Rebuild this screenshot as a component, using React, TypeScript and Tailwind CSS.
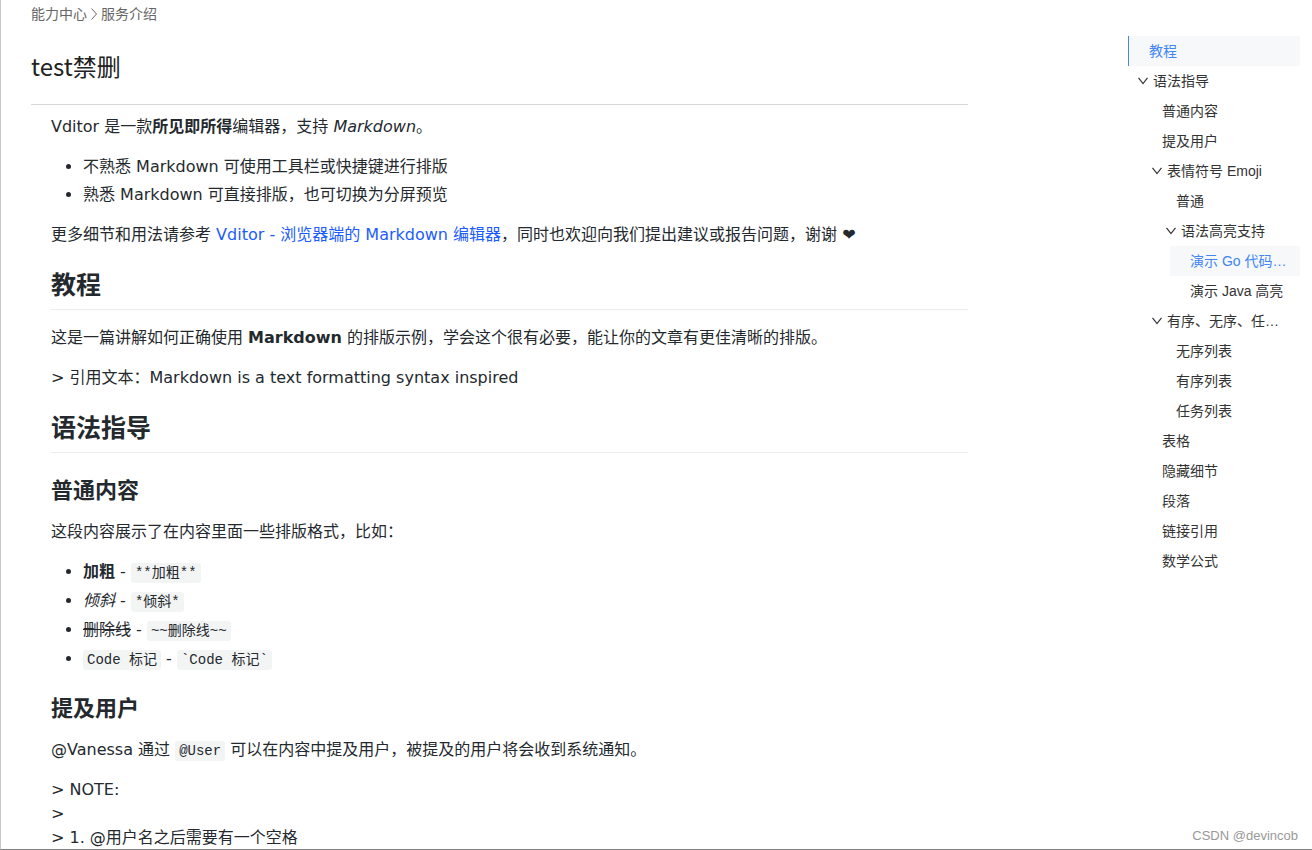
import { useState, type ReactNode } from "react";

type TocNode = {
  title: string;
  active?: "current" | "selected";
  children?: TocNode[];
};

const toc: TocNode[] = [
  { title: "教程", active: "current" },
  {
    title: "语法指导",
    children: [
      { title: "普通内容" },
      { title: "提及用户" },
      {
        title: "表情符号 Emoji",
        children: [
          { title: "普通" },
          {
            title: "语法高亮支持",
            children: [
              { title: "演示 Go 代码…", active: "selected" },
              { title: "演示 Java 高亮" },
            ],
          },
        ],
      },
      {
        title: "有序、无序、任…",
        children: [
          { title: "无序列表" },
          { title: "有序列表" },
          { title: "任务列表" },
        ],
      },
      { title: "表格" },
      { title: "隐藏细节" },
      { title: "段落" },
      { title: "链接引用" },
      { title: "数学公式" },
    ],
  },
];

function TocItem({ node }: { node: TocNode }) {
  const [open, setOpen] = useState(true);

  if (!node.children) {
    const state =
      node.active === "current"
        ? "border-l border-[#4285f4] bg-[#f6f8fa] text-[#4285f4]"
        : node.active === "selected"
          ? "bg-[#f6f8fa] text-[#4285f4]"
          : "text-[#333]";
    return (
      <li>
        <a href="#" className={`block h-[30px] truncate pl-5 leading-[30px] ${state}`}>
          {node.title}
        </a>
      </li>
    );
  }

  return (
    <li>
      <button
        type="button"
        aria-expanded={open}
        onClick={() => setOpen(!open)}
        className="flex h-[30px] w-full items-center gap-[5px] pl-[10px] text-left text-[#333]"
      >
        <svg
          viewBox="0 0 10 10"
          className={open ? "size-[10px] shrink-0" : "size-[10px] shrink-0 -rotate-90"}
          fill="none"
          stroke="currentColor"
          strokeWidth="1.2"
          aria-hidden="true"
        >
          <path d="M0.5 1.8 L5 7.6 L9.5 1.8" />
        </svg>
        <span className="truncate">{node.title}</span>
      </button>
      {open && (
        <ul className="pl-[14px]">
          {node.children.map((child) => (
            <TocItem key={child.title} node={child} />
          ))}
        </ul>
      )}
    </li>
  );
}

function Code({ children }: { children: ReactNode }) {
  return (
    <code className="rounded-[3px] bg-[#f3f4f4] px-1 py-[2px] font-['Liberation_Mono','Noto_Sans_CJK_SC',monospace] text-[14px] leading-5">
      {children}
    </code>
  );
}

function H2({ children }: { children: ReactNode }) {
  return (
    <h2 className="mt-6 mb-4 border-b border-[#eaecef] pb-2 text-[25px] leading-[30px] font-semibold">
      {children}
    </h2>
  );
}

function H3({ children }: { children: ReactNode }) {
  return <h3 className="mt-6 mb-4 text-[22px] leading-[27px] font-semibold">{children}</h3>;
}

export default function App() {
  return (
    <div className="relative flex h-screen items-start gap-40 overflow-hidden border-b border-l border-b-[#808080] border-l-[#c8c8c8] bg-white pr-3 pl-[30px]">
      <main className="min-w-0 flex-1 font-['DejaVu_Sans','Noto_Sans_CJK_SC',sans-serif] text-[#24292e]">
        <nav
          aria-label="面包屑"
          className="flex items-center gap-1 pt-1 font-['Liberation_Sans','Noto_Sans_CJK_SC',sans-serif] text-sm text-[#666]"
        >
          <a href="#">能力中心</a>
          <svg
            viewBox="0 0 6 12"
            className="h-3 w-[6px]"
            fill="none"
            stroke="currentColor"
            aria-hidden="true"
          >
            <path d="M0.5 0.5 L5.5 6 L0.5 11.5" />
          </svg>
          <a href="#">服务介绍</a>
        </nav>
        <h1 className="mt-6 border-b border-[#d8d8d8] pb-5 font-['Noto_Sans_CJK_SC',sans-serif] text-2xl leading-9 text-[#222]">
          test禁删
        </h1>
        <article className="pt-[10px] pl-5 text-base leading-6">
          <p className="mb-4">
            Vditor 是一款<strong>所见即所得</strong>编辑器，支持 <em>Markdown</em>。
          </p>
          <ul className="mb-4 list-disc space-y-1 pl-8">
            <li>不熟悉 Markdown 可使用工具栏或快捷键进行排版</li>
            <li>熟悉 Markdown 可直接排版，也可切换为分屏预览</li>
          </ul>
          <p>
            更多细节和用法请参考{" "}
            <a href="#" className="text-[#1a5cff]">
              Vditor - 浏览器端的 Markdown 编辑器
            </a>
            ，同时也欢迎向我们提出建议或报告问题，谢谢 <span className="leading-none">❤︎</span>
          </p>
          <H2>教程</H2>
          <p className="mb-4">
            这是一篇讲解如何正确使用 <strong>Markdown</strong>{" "}
            的排版示例，学会这个很有必要，能让你的文章有更佳清晰的排版。
          </p>
          <p>&gt; 引用文本：Markdown is a text formatting syntax inspired</p>
          <H2>语法指导</H2>
          <H3>普通内容</H3>
          <p className="mb-4">这段内容展示了在内容里面一些排版格式，比如：</p>
          <ul className="list-disc space-y-[5px] pl-8">
            <li>
              <strong>加粗</strong> - <Code>**加粗**</Code>
            </li>
            <li>
              <em>倾斜</em> - <Code>*倾斜*</Code>
            </li>
            <li>
              <s>删除线</s> - <Code>~~删除线~~</Code>
            </li>
            <li>
              <Code>Code 标记</Code> - <Code>`Code 标记`</Code>
            </li>
          </ul>
          <H3>提及用户</H3>
          <p className="mb-4">
            @Vanessa 通过 <Code>@User</Code> 可以在内容中提及用户，被提及的用户将会收到系统通知。
          </p>
          <p>
            &gt; NOTE:
            <br />
            &gt;
            <br />
            &gt; 1. @用户名之后需要有一个空格
          </p>
        </article>
      </main>
      <aside className="w-[172px] shrink-0 pt-9 font-['Liberation_Sans','Noto_Sans_CJK_SC',sans-serif] text-sm">
        <nav aria-label="目录">
          <ul>
            {toc.map((node) => (
              <TocItem key={node.title} node={node} />
            ))}
          </ul>
        </nav>
      </aside>
      <span className="absolute right-[14px] bottom-1 font-['Liberation_Sans',sans-serif] text-[13px] text-[#999]">
        CSDN @devincob
      </span>
    </div>
  );
}
